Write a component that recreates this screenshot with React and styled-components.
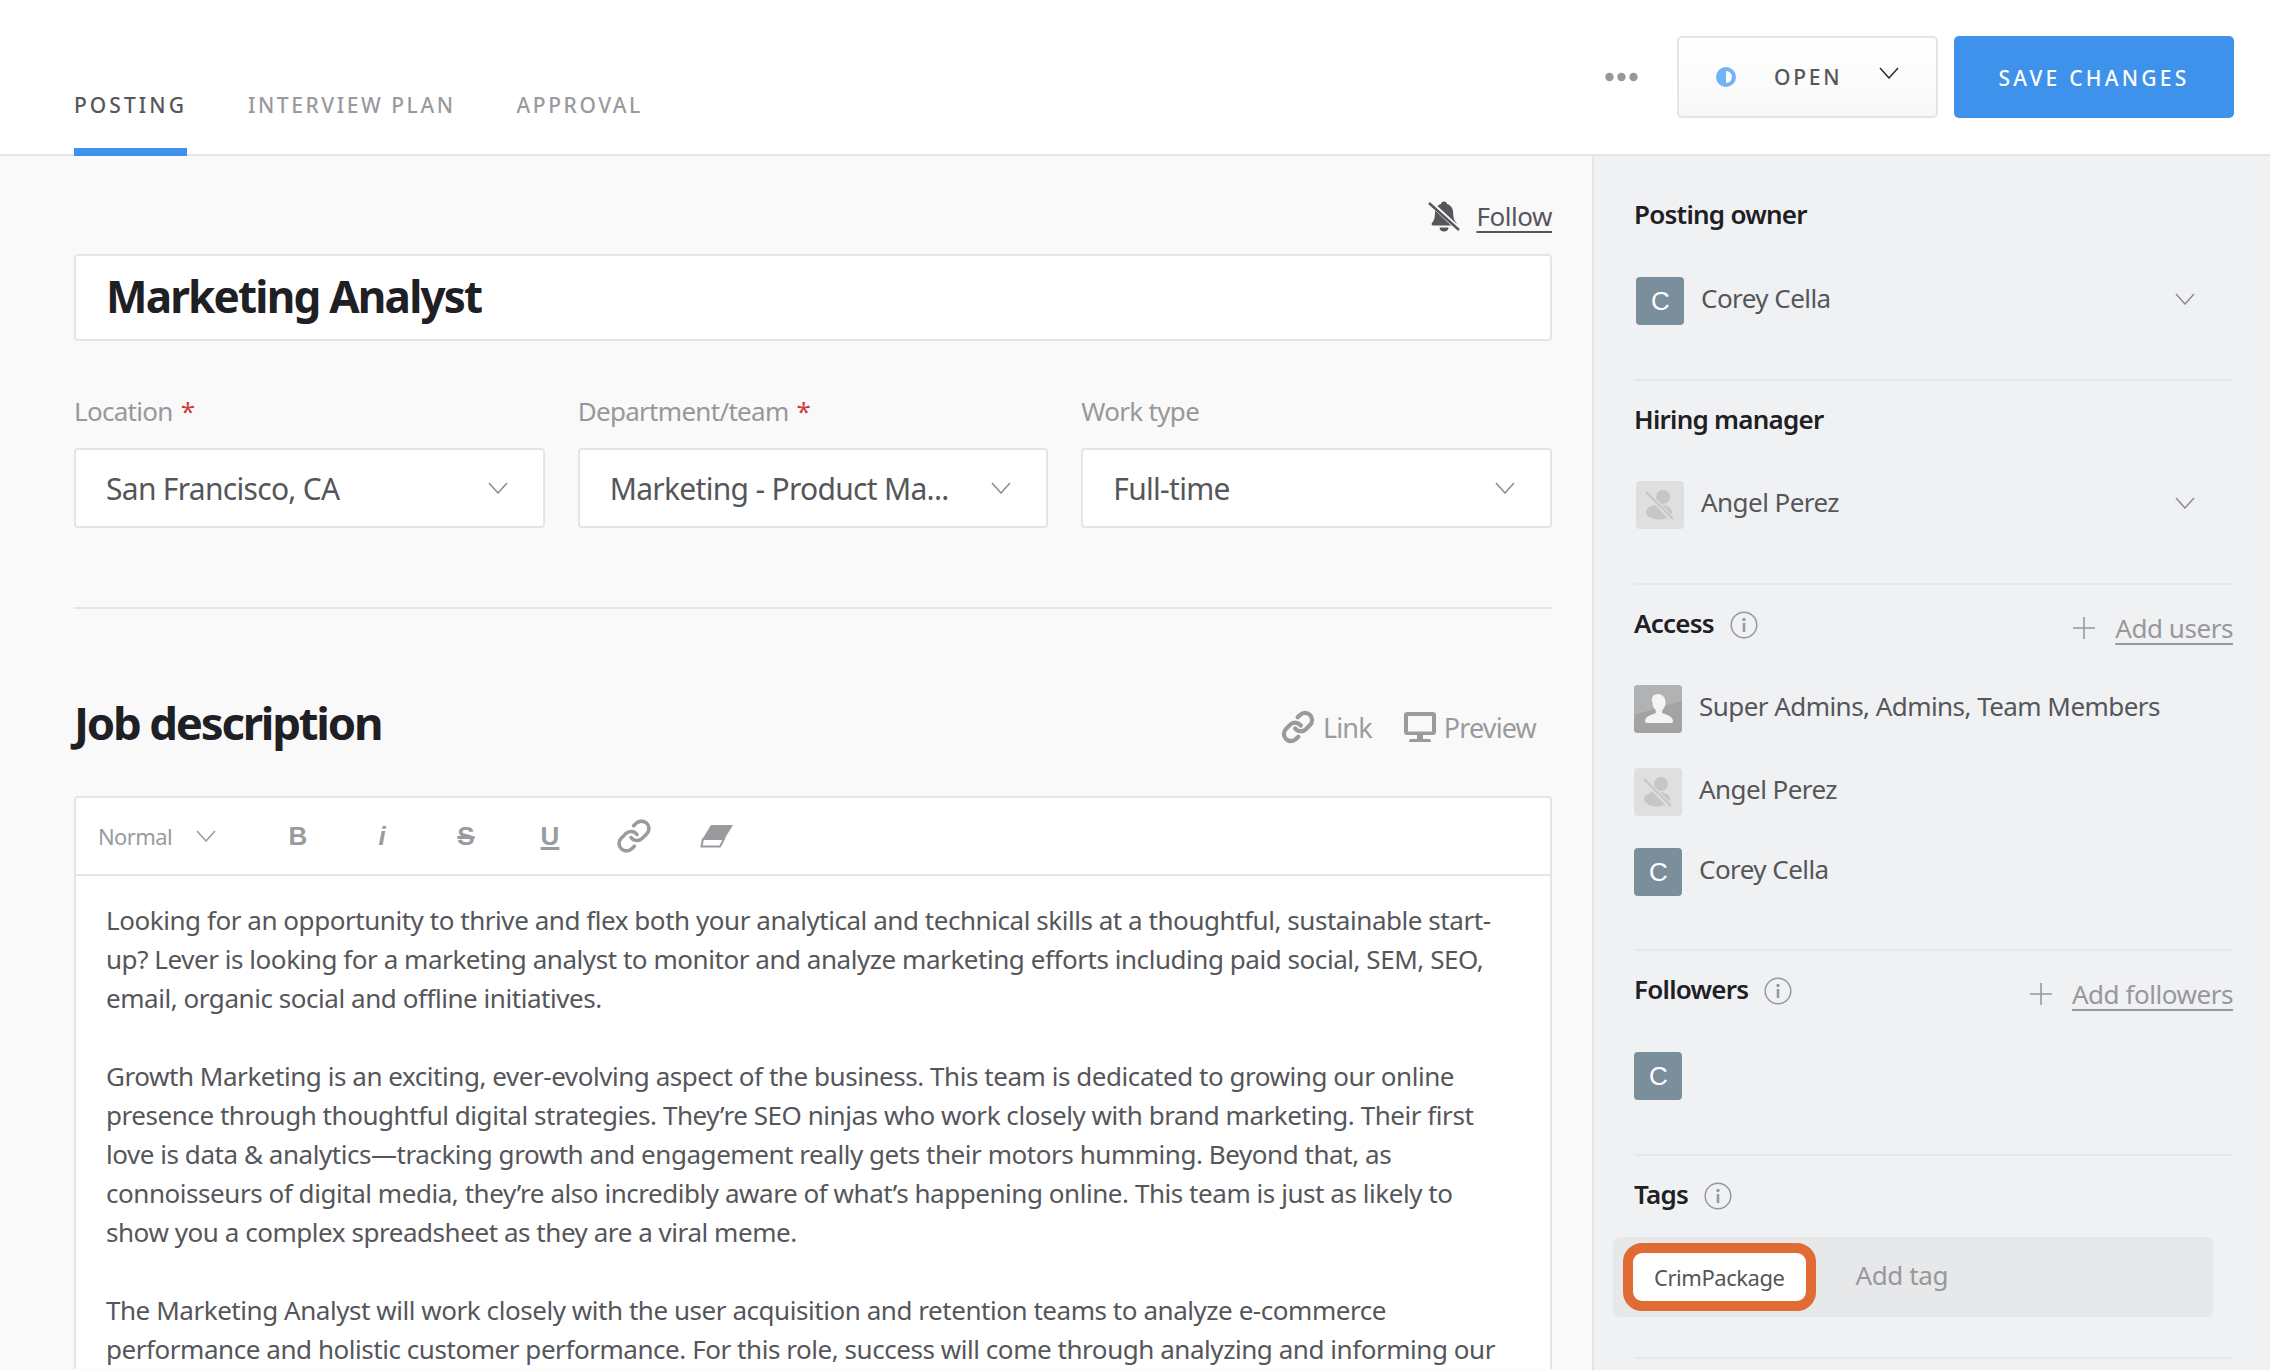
import React from "react";
import styled, { createGlobalStyle } from "styled-components";
import { Link as LinkIcon } from "lucide-react";

const GlobalStyle = createGlobalStyle`
  html, body {
    margin: 0;
    padding: 0;
    height: 100%;
    overflow: hidden;
    background: #f9f9f9;
  }
  body {
    font-family: "Noto Sans", "Open Sans", sans-serif;
    color: #55565a;
  }
  * { box-sizing: border-box; }
`;

const Page = styled.div`
  width: 2270px;
  height: 1370px;
  display: flex;
  flex-direction: column;
  overflow: hidden;
`;

const Header = styled.header`
  height: 156px;
  flex: none;
  background: #fff;
  border-bottom: 2px solid #e4e5e7;
  display: flex;
  justify-content: space-between;
  padding: 0 36px 0 74px;
`;

const Tabs = styled.nav`
  display: flex;
  gap: 61px;
`;

const Tab = styled.a`
  height: 156px;
  padding-top: 90px;
  line-height: 30px;
  font-size: 21px;
  letter-spacing: ${(p) => (p.$active ? 3.05 : 2.55)}px;
  font-weight: 500;
  color: ${(p) => (p.$active ? "#55565a" : "#999a9d")};
  border-bottom: 8px solid ${(p) => (p.$active ? "#3f92ec" : "transparent")};
`;

const Actions = styled.div`
  display: flex;
  align-items: flex-start;
  padding-top: 36px;
`;

const Dots = styled.svg`
  width: 33px;
  height: 10px;
  margin: 36px 39px 0 0;
`;

const StatusButton = styled.button`
  width: 261px;
  height: 82px;
  margin-right: 16px;
  padding: 0 37px 0 37px;
  display: flex;
  align-items: center;
  background: linear-gradient(#ffffff, #f8f8f8);
  border: 2px solid #e5e5e5;
  border-radius: 5px;
  font-family: inherit;
`;

const StatusText = styled.span`
  font-size: 21px;
  letter-spacing: 2.8px;
  color: #55565a;
  font-weight: 500;
  margin-left: 38px;
  flex: 1;
  text-align: left;
`;

const ChevronSlot = styled.span`
  display: flex;
  flex: none;
  padding-bottom: ${(p) => p.$lift || 0}px;
`;

const SaveButton = styled.button`
  width: 280px;
  height: 82px;
  border: none;
  border-radius: 5px;
  padding: 2px 0 0;
  background: #3f92ec;
  color: #fff;
  font-family: inherit;
  font-size: 21px;
  font-weight: 500;
  letter-spacing: 3.25px;
`;

const Body = styled.div`
  flex: 1;
  display: flex;
  min-height: 0;
`;

const Main = styled.main`
  width: 1592px;
  flex: none;
  padding: 40px 40px 0 74px;
  background: #f9f9f9;
  overflow: hidden;
`;

const FollowRow = styled.div`
  height: 40px;
  display: flex;
  justify-content: flex-end;
  align-items: center;
  gap: 16px;
`;

const UnderlinedLink = styled.a`
  font-size: 26px;
  letter-spacing: -0.45px;
  color: ${(p) => p.$color || "#55565a"};
  text-decoration: underline;
  text-underline-offset: 5px;
  text-decoration-thickness: 2px;
`;

const TitleBox = styled.div`
  margin-top: 18px;
  height: 87px;
  background: #fff;
  border: 2px solid #e5e5e5;
  border-radius: 4px;
  padding: 0 0 3px 30px;
  display: flex;
  align-items: center;
  font-size: 44px;
  font-weight: 700;
  letter-spacing: -1.8px;
  color: #1e2024;
`;

const FieldGrid = styled.div`
  margin-top: 54px;
  display: grid;
  grid-template-columns: repeat(3, 1fr);
  gap: 33px;
`;

const Field = styled.div`
  display: flex;
  flex-direction: column;
  gap: 21px;
`;

const FieldLabel = styled.label`
  height: 32px;
  line-height: 32px;
  font-size: 26px;
  letter-spacing: -0.7px;
  color: #97989b;
`;

const Required = styled.span`
  color: #cf3a3a;
  margin-left: 2px;
`;

const Select = styled.div`
  height: 80px;
  background: #fff;
  border: 2px solid #e5e5e5;
  border-radius: 4px;
  padding: 0 35px 0 30px;
  display: flex;
  align-items: center;
  justify-content: space-between;
  font-size: 30px;
  letter-spacing: -0.7px;
  color: #55565a;
`;

const Divider = styled.hr`
  margin: 79px 0 0;
  border: none;
  height: 2px;
  background: #e5e5e5;
`;

const DescriptionHead = styled.div`
  margin-top: 86px;
  height: 56px;
  display: flex;
  justify-content: space-between;
  align-items: center;
`;

const Heading = styled.h2`
  margin: 0;
  padding-bottom: 3px;
  font-size: 45.5px;
  font-weight: 700;
  letter-spacing: -2.2px;
  color: #1e2024;
`;

const HeadActions = styled.div`
  display: flex;
  align-items: center;
  gap: 32px;
  padding: 8px 16px 0 0;
`;

const HeadAction = styled.a`
  display: flex;
  align-items: center;
  gap: 8px;
  font-size: 27px;
  letter-spacing: -0.85px;
  color: #9a9b9e;
`;

const Editor = styled.section`
  margin-top: 45px;
  background: #fff;
  border: 2px solid #e5e5e5;
  border-bottom: none;
  border-radius: 4px 4px 0 0;
`;

const Toolbar = styled.div`
  height: 78px;
  border-bottom: 2px solid #e5e5e5;
  padding-left: 22px;
  display: flex;
  align-items: center;
  color: #9a9b9e;
`;

const StyleLabel = styled.span`
  font-size: 22px;
  letter-spacing: -0.6px;
  width: 98px;
`;

const ToolGroup = styled.div`
  display: flex;
  align-items: center;
  gap: 48px;
  margin-left: 64px;
`;

const ToolLetter = styled.span`
  width: 36px;
  text-align: center;
  font-family: "Liberation Sans", sans-serif;
  font-weight: 700;
  font-size: 26px;
  color: #9a9b9e;
  font-style: ${(p) => (p.$italic ? "italic" : "normal")};
  text-decoration: ${(p) => p.$line || "none"};
  text-decoration-thickness: 2.5px;
`;

const EditorBody = styled.div`
  padding: 25px 22px 0 30px;
  font-size: 26px;
  line-height: 39px;
  letter-spacing: -0.45px;
  color: #55565a;
`;

const Paragraph = styled.p`
  margin: 0 0 39px;
`;

const Line = styled.span`
  display: block;
  white-space: nowrap;
`;

const Sidebar = styled.aside`
  flex: 1;
  background: #f0f1f3;
  border-left: 2px solid #e4e5e7;
  padding: 0 37px 0 40px;
  overflow: hidden;
`;

const Section = styled.section`
  padding: 24px 0 ${(p) => p.$bottom ?? 54}px;
  border-bottom: 2px solid #e6e7e9;
  &:first-child {
    padding-top: 44px;
  }
`;

const SectionHead = styled.div`
  height: 32px;
  display: flex;
  align-items: center;
  justify-content: space-between;
`;

const TitleGroup = styled.div`
  display: flex;
  align-items: center;
  gap: 16px;
`;

const SectionTitle = styled.h3`
  margin: 0;
  padding-bottom: 4px;
  font-size: 26px;
  font-weight: 600;
  letter-spacing: -0.75px;
  color: #1e2024;
`;

const AddGroup = styled.div`
  display: flex;
  align-items: center;
  gap: 20px;
  padding-top: 6px;
`;

const PersonRow = styled.div`
  margin-top: ${(p) => p.$top ?? 45}px;
  padding: ${(p) => (p.$select ? "0 38px 0 2px" : "0")};
  display: flex;
  align-items: center;
  gap: 17px;
  font-size: 26px;
  letter-spacing: -0.55px;
  color: #55565a;
`;

const PersonName = styled.span`
  flex: 1;
  padding-bottom: 6px;
`;

const Avatar = styled.div`
  width: 48px;
  height: 48px;
  flex: none;
  border-radius: 4px;
  overflow: hidden;
  display: flex;
  align-items: center;
  justify-content: center;
  font-family: "Liberation Sans", sans-serif;
  font-size: 26px;
  color: #fff;
  background: ${(p) => p.$bg || "#7b8e9c"};
`;

const TagField = styled.div`
  margin: 25px 20px 0 -21px;
  height: 80px;
  background: #e7e8ea;
  border-radius: 6px;
  display: flex;
  align-items: center;
  padding-left: 20px;
  gap: 40px;
`;

const Tag = styled.span`
  height: 48px;
  padding: 0 21px;
  display: flex;
  align-items: center;
  background: #fff;
  border-radius: 9px;
  outline: 10px solid #e06b33;
  font-size: 22px;
  letter-spacing: -0.45px;
  color: #55565a;
`;

const TagPlaceholder = styled.span`
  margin-left: 10px;
  padding-bottom: 4px;
  font-size: 26px;
  letter-spacing: -0.4px;
  color: #97989b;
`;

const Chevron = ({ color = "#8b8c8f", w = 20 }) => (
  <svg width={w} height={w * 0.6} viewBox="0 0 20 12" fill="none">
    <path d="M1 1l9 10 9-10" stroke={color} strokeWidth="1.5" />
  </svg>
);

const InfoIcon = () => (
  <svg width="28" height="28" viewBox="0 0 28 28">
    <circle cx="14" cy="14" r="12.8" fill="none" stroke="#97989b" strokeWidth="1.5" />
    <circle cx="14" cy="8.5" r="1.7" fill="#97989b" />
    <rect x="12.7" y="12" width="2.6" height="9" fill="#97989b" />
  </svg>
);

const PlusIcon = () => (
  <svg width="22" height="22" viewBox="0 0 22 22">
    <path d="M11 0v22M0 11h22" stroke="#97989b" strokeWidth="1.6" />
  </svg>
);

const MutedBell = () => (
  <svg width="32" height="32" viewBox="0 0 32 32">
    <path
      fill="#55565a"
      d="M16 1.5c1.6 0 2.8 1.1 3 2.6 4 1.3 6.2 4.6 6.2 9 0 4.500.8 7.500 3 10 .8.900.2 2.400-1 2.400H5c-1.300 0-1.900-1.500-1-2.400 2.200-2.500 3-5.500 3-10 0-4.400 2.200-7.700 6-9 .2-1.500 1.400-2.600 3-2.600z"
    />
    <path fill="#55565a" d="M11.500 27.500h9c0 2.400-2 4-4.500 4s-4.500-1.600-4.500-4z" />
    <path d="M1.500 2l29 27" stroke="#f9f9f9" strokeWidth="5" />
    <path d="M1 3l30 27" stroke="#55565a" strokeWidth="2.400" />
  </svg>
);

const MonitorIcon = () => (
  <svg width="32" height="32" viewBox="0 0 32 32">
    <path
      fill="#9a9b9e"
      fillRule="evenodd"
      d="M3 1h26c1.600 0 3 1.300 3 3v17c0 1.700-1.400 3-3 3H3c-1.600 0-3-1.300-3-3V4c0-1.700 1.400-3 3-3zm1 4v15.500h24V5z"
    />
    <path fill="#9a9b9e" d="M13 24h6v4h6c1.200 0 2 .8 2 2v1H5v-1c0-1.200.8-2 2-2h6z" />
  </svg>
);

const EraserIcon = () => (
  <svg width="34" height="24" viewBox="0 0 34 24">
    <path fill="#9a9b9e" d="M11 1h22L25 14H3z" />
    <path d="M3 15h21l-4 7.500H1.500z" fill="none" stroke="#9a9b9e" strokeWidth="2" />
  </svg>
);

const StatusIcon = () => (
  <svg width="20" height="20" viewBox="0 0 20 20">
    <circle cx="10" cy="10" r="10" fill="#6fb4f7" />
    <path d="M10 4a6 6 0 0 1 0 12z" fill="#fff" />
  </svg>
);

const SilhouetteMuted = () => (
  <svg width="48" height="48" viewBox="0 0 48 48">
    <circle cx="27" cy="16" r="7" fill="#c6c6c7" />
    <ellipse cx="23" cy="31" rx="13" ry="7.500" fill="#c6c6c7" />
    <path d="M11 12l26 27" stroke="#dedfe0" strokeWidth="5" />
    <path d="M10 11l27 27" stroke="#c6c6c7" strokeWidth="2" />
  </svg>
);

const SilhouetteGroup = () => (
  <svg width="48" height="48" viewBox="0 0 48 48">
    <rect width="48" height="48" fill="#b1b2b4" />
    <path d="M0 30L48 16v32H0z" fill="#a2a3a5" />
    <path
      fill="#f4f4f5"
      d="M24 9c4.500 0 7.500 3.500 7.500 8.500 0 3.200-1.300 6-3.300 7.700v3c5 1.500 10.800 3.300 10.800 7.800 0 1.200-.8 2-2 2H13c-1.200 0-2-.8-2-2 0-4.500 5.800-6.300 10.800-7.800v-3c-2-1.700-3.300-4.500-3.300-7.700C16.500 12.500 19.500 9 24 9z"
    />
  </svg>
);

const paragraphs = [
  [
    "Looking for an opportunity to thrive and flex both your analytical and technical skills at a thoughtful, sustainable start-",
    "up? Lever is looking for a marketing analyst to monitor and analyze marketing efforts including paid social, SEM, SEO,",
    "email, organic social and offline initiatives.",
  ],
  [
    "Growth Marketing is an exciting, ever-evolving aspect of the business. This team is dedicated to growing our online",
    "presence through thoughtful digital strategies. They’re SEO ninjas who work closely with brand marketing. Their first",
    "love is data & analytics—tracking growth and engagement really gets their motors humming. Beyond that, as",
    "connoisseurs of digital media, they’re also incredibly aware of what’s happening online. This team is just as likely to",
    "show you a complex spreadsheet as they are a viral meme.",
  ],
  [
    "The Marketing Analyst will work closely with the user acquisition and retention teams to analyze e-commerce",
    "performance and holistic customer performance. For this role, success will come through analyzing and informing our",
  ],
];

export default function App() {
  return (
    <Page>
      <GlobalStyle />
      <Header>
        <Tabs>
          <Tab $active>POSTING</Tab>
          <Tab>INTERVIEW PLAN</Tab>
          <Tab>APPROVAL</Tab>
        </Tabs>
        <Actions>
          <Dots viewBox="0 0 33 10">
            <circle cx="4.500" cy="5" r="4.200" fill="#97989b" />
            <circle cx="16.500" cy="5" r="4.200" fill="#97989b" />
            <circle cx="28.500" cy="5" r="4.200" fill="#97989b" />
          </Dots>
          <StatusButton>
            <StatusIcon />
            <StatusText>OPEN</StatusText>
            <ChevronSlot $lift={8}>
              <Chevron color="#2a2b2e" />
            </ChevronSlot>
          </StatusButton>
          <SaveButton>SAVE CHANGES</SaveButton>
        </Actions>
      </Header>

      <Body>
        <Main>
          <FollowRow>
            <MutedBell />
            <UnderlinedLink>Follow</UnderlinedLink>
          </FollowRow>
          <TitleBox>Marketing Analyst</TitleBox>

          <FieldGrid>
            <Field>
              <FieldLabel>
                Location <Required>*</Required>
              </FieldLabel>
              <Select>
                San Francisco, CA
                <Chevron />
              </Select>
            </Field>
            <Field>
              <FieldLabel>
                Department/team <Required>*</Required>
              </FieldLabel>
              <Select>
                Marketing - Product Ma...
                <Chevron />
              </Select>
            </Field>
            <Field>
              <FieldLabel>Work type</FieldLabel>
              <Select>
                Full-time
                <Chevron />
              </Select>
            </Field>
          </FieldGrid>

          <Divider />

          <DescriptionHead>
            <Heading>Job description</Heading>
            <HeadActions>
              <HeadAction>
                <LinkIcon size={34} strokeWidth={3} color="#9a9b9e" />
                Link
              </HeadAction>
              <HeadAction>
                <MonitorIcon />
                Preview
              </HeadAction>
            </HeadActions>
          </DescriptionHead>

          <Editor>
            <Toolbar>
              <StyleLabel>Normal</StyleLabel>
              <Chevron color="#97989b" />
              <ToolGroup>
                <ToolLetter>B</ToolLetter>
                <ToolLetter $italic>i</ToolLetter>
                <ToolLetter $line="line-through">S</ToolLetter>
                <ToolLetter $line="underline">U</ToolLetter>
                <LinkIcon size={36} strokeWidth={2.4} color="#9a9b9e" />
                <EraserIcon />
              </ToolGroup>
            </Toolbar>
            <EditorBody>
              {paragraphs.map((lines, i) => (
                <Paragraph key={i}>
                  {lines.map((line) => (
                    <Line key={line}>{line}</Line>
                  ))}
                </Paragraph>
              ))}
            </EditorBody>
          </Editor>
        </Main>

        <Sidebar>
          <Section>
            <SectionHead>
              <SectionTitle>Posting owner</SectionTitle>
            </SectionHead>
            <PersonRow $select>
              <Avatar>C</Avatar>
              <PersonName>Corey Cella</PersonName>
              <ChevronSlot $lift={4}>
                <Chevron />
              </ChevronSlot>
            </PersonRow>
          </Section>

          <Section>
            <SectionHead>
              <SectionTitle>Hiring manager</SectionTitle>
            </SectionHead>
            <PersonRow $select $top={44}>
              <Avatar $bg="#dedfe0">
                <SilhouetteMuted />
              </Avatar>
              <PersonName>Angel Perez</PersonName>
              <ChevronSlot $lift={4}>
                <Chevron />
              </ChevronSlot>
            </PersonRow>
          </Section>

          <Section $bottom={53}>
            <SectionHead>
              <TitleGroup>
                <SectionTitle>Access</SectionTitle>
                <InfoIcon />
              </TitleGroup>
              <AddGroup>
                <PlusIcon />
                <UnderlinedLink $color="#97989b">Add users</UnderlinedLink>
              </AddGroup>
            </SectionHead>
            <PersonRow $top={44}>
              <Avatar $bg="#b1b2b4">
                <SilhouetteGroup />
              </Avatar>
              <PersonName>Super Admins, Admins, Team Members</PersonName>
            </PersonRow>
            <PersonRow $top={35}>
              <Avatar $bg="#dedfe0">
                <SilhouetteMuted />
              </Avatar>
              <PersonName>Angel Perez</PersonName>
            </PersonRow>
            <PersonRow $top={32}>
              <Avatar>C</Avatar>
              <PersonName>Corey Cella</PersonName>
            </PersonRow>
          </Section>

          <Section>
            <SectionHead>
              <TitleGroup>
                <SectionTitle>Followers</SectionTitle>
                <InfoIcon />
              </TitleGroup>
              <AddGroup>
                <PlusIcon />
                <UnderlinedLink $color="#97989b">Add followers</UnderlinedLink>
              </AddGroup>
            </SectionHead>
            <PersonRow>
              <Avatar>C</Avatar>
            </PersonRow>
          </Section>

          <Section $bottom={40}>
            <SectionHead>
              <TitleGroup>
                <SectionTitle>Tags</SectionTitle>
                <InfoIcon />
              </TitleGroup>
            </SectionHead>
            <TagField>
              <Tag>CrimPackage</Tag>
              <TagPlaceholder>Add tag</TagPlaceholder>
            </TagField>
          </Section>
        </Sidebar>
      </Body>
    </Page>
  );
}
